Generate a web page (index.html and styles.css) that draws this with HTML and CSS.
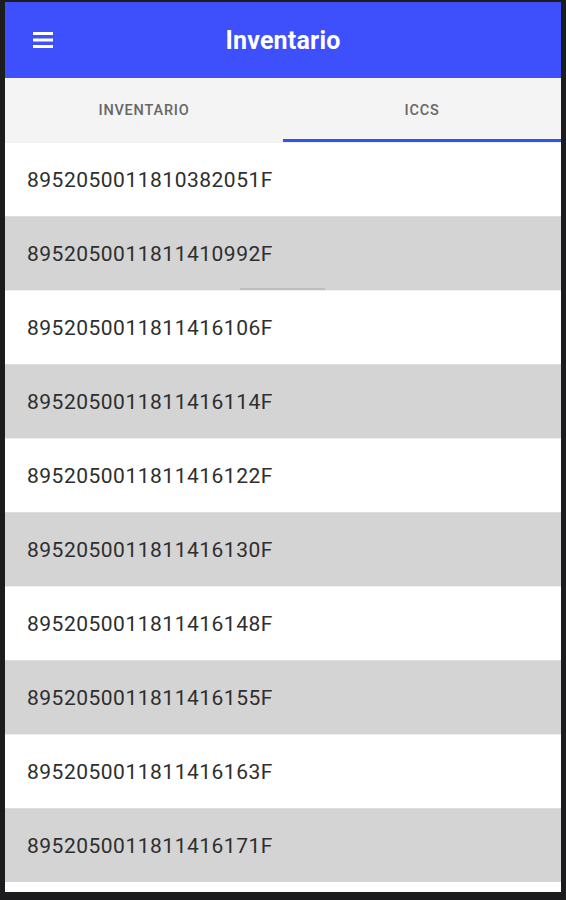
FILE: index.html
```html
<!DOCTYPE html>
<html lang="es">
<head>
    <meta charset="UTF-8">
    <meta name="viewport" content="width=device-width, initial-scale=1.0">
    <title>Inventario</title>
    <link rel="stylesheet" href="styles.css">
</head>
<body>
    <div class="screen">
        <header class="toolbar">
            <span class="menu-btn">
                <svg width="20" height="16" viewBox="0 0 20 16">
                    <rect x="0" y="0" width="20" height="3" fill="#fff"/>
                    <rect x="0" y="6.5" width="20" height="3" fill="#fff"/>
                    <rect x="0" y="13" width="20" height="3" fill="#fff"/>
                </svg>
            </span>
            <h1>Inventario</h1>
        </header>

        <nav class="tabs">
            <div class="tab">INVENTARIO</div>
            <div class="tab active">ICCS</div>
        </nav>

        <ul class="list">
            <li>8952050011810382051F</li>
            <li class="scroll-edge">8952050011811410992F</li>
            <li>8952050011811416106F</li>
            <li>8952050011811416114F</li>
            <li>8952050011811416122F</li>
            <li>8952050011811416130F</li>
            <li>8952050011811416148F</li>
            <li>8952050011811416155F</li>
            <li>8952050011811416163F</li>
            <li>8952050011811416171F</li>
        </ul>
    </div>
</body>
</html>
```

FILE: styles.css
```css
html, body {
    margin: 0;
    padding: 0;
}
body {
    background-color: #1c1c1e;
    font-family: Roboto, "Liberation Sans", Arial, sans-serif;
    height: 900px;
    overflow: hidden;
}
.screen {
    width: 556px;
    height: 890px;
    margin: 2px 0 0 5px;
    background-color: #fff;
    overflow: hidden;
}
.toolbar {
    height: 76px;
    background-color: #3d50fc;
    display: flex;
    align-items: center;
    position: relative;
}
.menu-btn {
    display: flex;
    margin-left: 28px;
    margin-top: 0;
}
.toolbar h1 {
    position: absolute;
    left: 0;
    right: 0;
    margin: 0;
    text-align: center;
    color: #fff;
    font-size: 25px;
    font-weight: 700;
    letter-spacing: 0.2px;
    pointer-events: none;
    top: 24px;
    line-height: 30px;
}
.tabs {
    display: flex;
    height: 64px;
    background-color: #f4f4f4;
}
.tab {
    flex: 1;
    display: flex;
    align-items: center;
    justify-content: center;
    padding-top: 4px;
    font-size: 14.5px;
    font-weight: 500;
    letter-spacing: 0.8px;
    color: #666;
    border-bottom: 3px solid transparent;
}
.tab.active {
    border-bottom-color: #2f55e6;
}
.list {
    list-style: none;
    margin: 0;
    padding: 0;
}
.list li {
    height: 74px;
    display: flex;
    align-items: center;
    padding-left: 22px;
    font-size: 21px;
    letter-spacing: 0.5px;
    color: #2e2e2e;
    border-top: 1px solid #f0f0f0;
    box-sizing: border-box;
}
.list li:nth-child(even) {
    background-color: #d4d4d4;
    border-top-color: #dcdcdc;
}
.list li.scroll-edge {
    position: relative;
}
.list li.scroll-edge::after {
    content: "";
    position: absolute;
    left: 235px;
    width: 85px;
    bottom: 0;
    height: 2px;
    background-color: #bdbdbd;
}
```
